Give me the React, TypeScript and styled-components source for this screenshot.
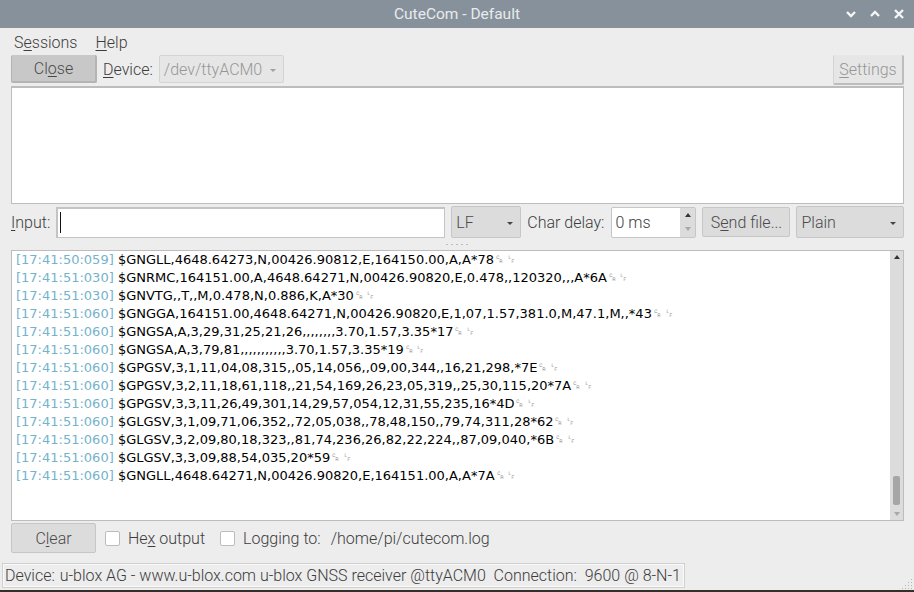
import React from "react";
import styled, { createGlobalStyle, css } from "styled-components";

const GlobalStyle = createGlobalStyle`
  html, body {
    margin: 0;
    padding: 0;
    width: 914px;
    height: 592px;
    overflow: hidden;
    background: #ededed;
  }
`;

const Window = styled.div`
  width: 914px;
  height: 592px;
  display: flex;
  flex-direction: column;
  background: #ededed;
  font-family: Roboto, "Liberation Sans", sans-serif;
  font-size: 16px;
  font-weight: 300;
  color: #3c3c3c;
  box-sizing: border-box;
  border-bottom: 2px solid #33302c;
  overflow: hidden;
`;

const TitleBar = styled.div`
  height: 28px;
  flex: none;
  position: relative;
  display: flex;
  align-items: center;
  justify-content: center;
  background: #87919b;
  color: #e8ebed;
  font-size: 15.5px;
  font-weight: 400;
  box-sizing: border-box;
  padding-bottom: 1px;
`;

const WindowButtons = styled.div`
  position: absolute;
  right: 9px;
  top: 9px;
  display: flex;
  gap: 12px;
`;

const MenuBar = styled.div`
  height: 27px;
  flex: none;
  display: flex;
  align-items: center;
  gap: 18px;
  padding: 1px 0 0 14px;
  box-sizing: border-box;
`;

const Key = styled.span`
  text-decoration: underline;
  text-decoration-thickness: 1px;
  text-underline-offset: 2px;
`;

const Row = styled.div<{ $h: number; $gap?: number; $top?: number }>`
  height: ${(p) => p.$h}px;
  margin-top: ${(p) => p.$top ?? 0}px;
  flex: none;
  display: flex;
  align-items: center;
  gap: ${(p) => p.$gap ?? 6}px;
  padding: 0 10px 0 11px;
  box-sizing: border-box;
  white-space: nowrap;
`;

const Button = styled.div<{ $w: number; $h: number; $state?: "down" | "off" }>`
  width: ${(p) => p.$w}px;
  height: ${(p) => p.$h}px;
  flex: none;
  display: flex;
  align-items: center;
  justify-content: center;
  box-sizing: border-box;
  border: 1px solid #c6c6c6;
  border-radius: 2px;
  background: #dcdcdc;
  color: #4a4a4a;
  ${(p) =>
    p.$state === "down" &&
    css`
      background: #c8c8c8;
      border-color: #b4b4b4;
      border-top: none;
      border-right-width: 2px;
      border-bottom-width: 2px;
    `}
  ${(p) =>
    p.$state === "off" &&
    css`
      margin-top: 2px;
      background: #e6e6e6;
      color: #969696;
      border-color: #d4d4d4;
      border-right: 2px solid #bdbdbd;
      border-bottom: 2px solid #bdbdbd;
      border-top: none;
    `}
`;

const Combo = styled.div<{ $w: number; $h: number; $off?: boolean }>`
  width: ${(p) => p.$w}px;
  height: ${(p) => p.$h}px;
  flex: none;
  position: relative;
  display: flex;
  align-items: center;
  box-sizing: border-box;
  padding-left: 4px;
  border: 1px solid ${(p) => (p.$off ? "#d4d4d4" : "#c6c6c6")};
  border-radius: 2px;
  background: ${(p) => (p.$off ? "#e6e6e6" : "#dcdcdc")};
  color: ${(p) => (p.$off ? "#969696" : "#4a4a4a")};

  &::after {
    content: "";
    position: absolute;
    right: 7px;
    top: 50%;
    margin-top: 0;
    border-left: 3px solid transparent;
    border-right: 3px solid transparent;
    border-top: 3px solid ${(p) => (p.$off ? "#a0a0a0" : "#444")};
  }
`;

const Spacer = styled.div`
  flex: 1;
`;

const TextPanel = styled.div`
  margin: 0 10px 0 11px;
  flex: none;
  background: #fff;
  box-sizing: border-box;
  border: 1px solid #bdbdbd;
`;

const OutputPanel = styled(TextPanel)`
  height: 118px;
  margin-top: 3px;
  border-top-width: 2px;
`;

const InputField = styled.div`
  flex: none;
  width: 389px;
  height: 31px;
  box-sizing: border-box;
  background: #fff;
  border: 1px solid #c4c4c4;
  border-top-width: 2px;
  border-left-width: 2px;
  display: flex;
  align-items: center;
  padding-left: 2px;
`;

const Caret = styled.div`
  width: 1px;
  height: 21px;
  background: #111;
`;

const SpinBox = styled.div`
  flex: none;
  width: 85px;
  height: 31px;
  margin-left: 1px;
  display: flex;
  box-sizing: border-box;
  border: 1px solid #c6c6c6;
  border-radius: 2px;
  background: #fff;
`;

const SpinValue = styled.div`
  flex: 1;
  display: flex;
  align-items: center;
  padding-left: 3px;
`;

const SpinArrows = styled.div`
  width: 15px;
  display: flex;
  flex-direction: column;
  background: #dcdcdc;
`;

const SpinArrow = styled.div<{ $dir: "up" | "down" }>`
  flex: 1;
  display: flex;
  align-items: center;
  justify-content: center;

  &::after {
    content: "";
    border-left: 3.5px solid transparent;
    border-right: 3.5px solid transparent;
    ${(p) =>
      p.$dir === "up"
        ? "border-bottom: 4px solid #333;"
        : "border-top: 4px solid #a8a8a8;"}
  }
`;

const SplitHandle = styled.div`
  height: 11px;
  flex: none;
  display: flex;
  align-items: center;
  justify-content: center;
  gap: 3px;
`;

const SplitDot = styled.i`
  width: 2px;
  height: 1px;
  background: #bcbcbc;
`;

const LogPanel = styled(TextPanel)`
  height: 271px;
  display: flex;
  overflow: hidden;
`;

const LogLines = styled.div`
  flex: 1;
  padding: 0 0 0 4px;
  font-family: "DejaVu Sans", sans-serif;
  font-size: 13px;
  font-weight: 400;
  color: #000;
  white-space: pre;
  overflow: hidden;
`;

const LogLine = styled.div`
  height: 18px;
  line-height: 17px;
`;

const Stamp = styled.span`
  color: #74b3cb;
`;

const Ctrl = styled.span`
  color: #808080;
  font-size: 13px;
  word-spacing: -2.5px;
`;

const ScrollBar = styled.div`
  width: 13px;
  flex: none;
  background: #dcdcdc;
  position: relative;
  display: flex;
  flex-direction: column;
  align-items: center;
  justify-content: space-between;
  padding: 4px 0;
  box-sizing: border-box;
`;

const ScrollThumb = styled.div`
  position: absolute;
  left: 3px;
  right: 3px;
  top: 225px;
  height: 29px;
  background: #a6a6a6;
  border-radius: 2px;
`;

const ScrollArrow = styled.div<{ $dir: "up" | "down" }>`
  border-left: 3px solid transparent;
  border-right: 3px solid transparent;
  ${(p) =>
    p.$dir === "up"
      ? "border-bottom: 4px solid #333;"
      : "border-top: 4px solid #a8a8a8;"}
`;

const CheckBox = styled.div<{ $left: number }>`
  width: 15px;
  height: 15px;
  flex: none;
  margin-left: ${(p) => p.$left}px;
  box-sizing: border-box;
  background: #fff;
  border: 1px solid #bcbcbc;
  border-radius: 2px;
`;

const PathLabel = styled.span`
  margin-left: 2px;
`;

const StatusBar = styled.div`
  flex: 1;
  position: relative;
  display: flex;
  align-items: flex-start;
  padding: 8px 0 0 2px;
`;

const StatusItem = styled.div`
  height: 25px;
  box-sizing: border-box;
  border: 1px solid #cfcfcf;
  outline: 1px solid #fafafa;
  outline-offset: -2px;
  display: flex;
  align-items: center;
  padding: 0 3px 0 2px;
  white-space: pre;
`;

const StatusLabel = styled.span`
  margin-right: 1px;
`;

const Grip = styled.svg`
  position: absolute;
  right: 1px;
  bottom: 1px;
`;

const LF = "\u240D \u240A";

const lines: [string, string][] = [
  ["17:41:50:059", "$GNGLL,4648.64273,N,00426.90812,E,164150.00,A,A*78"],
  ["17:41:51:030", "$GNRMC,164151.00,A,4648.64271,N,00426.90820,E,0.478,,120320,,,A*6A"],
  ["17:41:51:030", "$GNVTG,,T,,M,0.478,N,0.886,K,A*30"],
  ["17:41:51:060", "$GNGGA,164151.00,4648.64271,N,00426.90820,E,1,07,1.57,381.0,M,47.1,M,,*43"],
  ["17:41:51:060", "$GNGSA,A,3,29,31,25,21,26,,,,,,,,3.70,1.57,3.35*17"],
  ["17:41:51:060", "$GNGSA,A,3,79,81,,,,,,,,,,,3.70,1.57,3.35*19"],
  ["17:41:51:060", "$GPGSV,3,1,11,04,08,315,,05,14,056,,09,00,344,,16,21,298,*7E"],
  ["17:41:51:060", "$GPGSV,3,2,11,18,61,118,,21,54,169,26,23,05,319,,25,30,115,20*7A"],
  ["17:41:51:060", "$GPGSV,3,3,11,26,49,301,14,29,57,054,12,31,55,235,16*4D"],
  ["17:41:51:060", "$GLGSV,3,1,09,71,06,352,,72,05,038,,78,48,150,,79,74,311,28*62"],
  ["17:41:51:060", "$GLGSV,3,2,09,80,18,323,,81,74,236,26,82,22,224,,87,09,040,*6B"],
  ["17:41:51:060", "$GLGSV,3,3,09,88,54,035,20*59"],
  ["17:41:51:060", "$GNGLL,4648.64271,N,00426.90820,E,164151.00,A,A*7A"],
];

function App() {
  return (
    <Window>
      <GlobalStyle />
      <TitleBar>
        CuteCom - Default
        <WindowButtons>
          <svg width="12" height="10" viewBox="0 0 12 10">
            <path d="M2 3l4 4 4-4" fill="none" stroke="#f4f6f7" strokeWidth="2.4" />
          </svg>
          <svg width="12" height="10" viewBox="0 0 12 10">
            <path d="M2 7l4-4 4 4" fill="none" stroke="#f4f6f7" strokeWidth="2.4" />
          </svg>
          <svg width="12" height="10" viewBox="0 0 12 10">
            <path d="M2 1l8 8M10 1l-8 8" fill="none" stroke="#f4f6f7" strokeWidth="2.4" />
          </svg>
        </WindowButtons>
      </TitleBar>

      <MenuBar>
        <span>
          S<Key>e</Key>ssions
        </span>
        <span>
          <Key>H</Key>elp
        </span>
      </MenuBar>

      <Row $h={28}>
        <Button $w={86} $h={28} $state="down">
          <span>
            Cl<Key>o</Key>se
          </span>
        </Button>
        <span>
          <Key>D</Key>evice:
        </span>
        <Combo $w={125} $h={28} $off>
          /dev/ttyACM0
        </Combo>
        <Spacer />
        <Button $w={71} $h={30} $state="off">
          <span>
            <Key>S</Key>ettings
          </span>
        </Button>
      </Row>

      <OutputPanel />

      <Row $h={34} $top={1}>
        <span>
          <Key>I</Key>nput:
        </span>
        <InputField>
          <Caret />
        </InputField>
        <Combo $w={70} $h={32}>
          LF
        </Combo>
        <span>Char delay:</span>
        <SpinBox>
          <SpinValue>0 ms</SpinValue>
          <SpinArrows>
            <SpinArrow $dir="up" />
            <SpinArrow $dir="down" />
          </SpinArrows>
        </SpinBox>
        <Button $w={88} $h={30}>
          <span>
            S<Key>e</Key>nd file...
          </span>
        </Button>
        <Combo $w={108} $h={32}>
          Plain
        </Combo>
      </Row>

      <SplitHandle>
        {[0, 1, 2, 3, 4].map((i) => (
          <SplitDot key={i} />
        ))}
      </SplitHandle>

      <LogPanel>
        <LogLines>
          {lines.map(([time, text], i) => (
            <LogLine key={i}>
              <Stamp>[{time}]</Stamp> {text}
              <Ctrl>{LF}</Ctrl>
            </LogLine>
          ))}
        </LogLines>
        <ScrollBar>
          <ScrollArrow $dir="up" />
          <ScrollThumb />
          <ScrollArrow $dir="down" />
        </ScrollBar>
      </LogPanel>

      <Row $h={34} $gap={8}>
        <Button $w={85} $h={30}>
          <span>
            C<Key>l</Key>ear
          </span>
        </Button>
        <CheckBox $left={1} />
        <span>
          He<Key>x</Key> output
        </span>
        <CheckBox $left={7} />
        <span>Logging to:</span>
        <PathLabel>/home/pi/cutecom.log</PathLabel>
      </Row>

      <StatusBar>
        <StatusItem>
          <StatusLabel>Device: </StatusLabel>u-blox AG - www.u-blox.com u-blox GNSS receiver @ttyACM0  Connection:  9600 @ 8-N-1
        </StatusItem>
        <Grip width="12" height="12" viewBox="0 0 12 12">
          <path
            d="M10 2h1v1h-1zM7 5h1v1H7zM10 5h1v1h-1zM4 8h1v1H4zM7 8h1v1H7zM10 8h1v1h-1zM1 11h1v1H1zM4 11h1v1H4zM7 11h1v1H7zM10 11h1v1h-1z"
            fill="#b5b5b5"
          />
        </Grip>
      </StatusBar>
    </Window>
  );
}

export default App;
